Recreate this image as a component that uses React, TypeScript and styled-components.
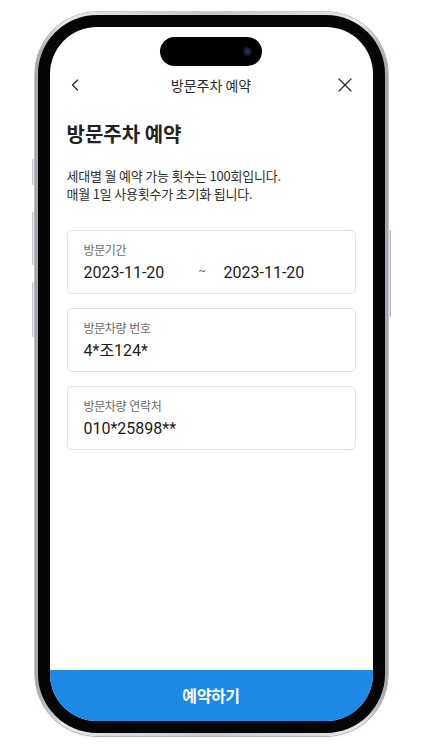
import React from 'react';
import styled, { createGlobalStyle } from 'styled-components';

const GlobalStyle = createGlobalStyle`
  * { box-sizing: border-box; }
  html, body { margin: 0; padding: 0; background: #ffffff; }
  body {
    font-family: "Noto Sans CJK KR", "Noto Sans", sans-serif;
    -webkit-font-smoothing: antialiased;
  }
`;

const Page = styled.div`
  width: 422px;
  height: 750px;
  padding-top: 12px;
  display: flex;
  justify-content: center;
  align-items: flex-start;
  background: #ffffff;
`;

const Frame = styled.div`
  position: relative;
  width: 353px;
  height: 724px;
  padding: 3px;
  border-radius: 62px;
  background: linear-gradient(90deg, #9ea3a9 0%, #e6e8eb 8%, #c3c7cc 50%, #e6e8eb 92%, #9ea3a9 100%);
  box-shadow: 0 0 0 0.5px #8d9197, 0 1px 2px rgba(0, 0, 0, 0.15);
`;

const SideButton = styled.div<{ $side: 'left' | 'right'; $top: number; $height: number }>`
  position: absolute;
  top: ${p => p.$top}px;
  ${p => (p.$side === 'left' ? 'left: -3px;' : 'right: -3px;')}
  width: 3px;
  height: ${p => p.$height}px;
  border-radius: 1px;
  background: linear-gradient(90deg, #b5b9be, #e4e6e9, #9da1a7);
`;

const Bezel = styled.div`
  width: 100%;
  height: 100%;
  padding: 12px;
  border-radius: 59px;
  background: #050505;
`;

const Screen = styled.div`
  position: relative;
  width: 100%;
  height: 100%;
  border-radius: 47px;
  overflow: hidden;
  background: #ffffff;
  display: flex;
  flex-direction: column;
`;

const Island = styled.div`
  position: absolute;
  top: 10px;
  left: 110px;
  width: 102px;
  height: 29px;
  border-radius: 15px;
  background: #000000;
`;

const Camera = styled.div`
  position: absolute;
  top: 10px;
  right: 10px;
  width: 9px;
  height: 9px;
  border-radius: 50%;
  background: radial-gradient(circle at 50% 50%, #2a3a6a 0%, #141a33 50%, #07080f 100%);
`;

const Header = styled.div`
  margin-top: 40px;
  height: 36px;
  padding: 0 17px 0 15px;
  display: flex;
  align-items: center;
  justify-content: space-between;
`;

const IconButton = styled.button`
  width: 20px;
  height: 20px;
  padding: 0;
  border: none;
  background: none;
  display: flex;
  align-items: center;
  justify-content: center;
  color: #2b2b2b;
`;

const HeaderTitle = styled.div`
  font-size: 14px;
  letter-spacing: 0;
  color: #2b2b2b;
  line-height: 20px;
  margin-left: 2px;
`;

const Content = styled.div`
  padding: 0 17px;
  display: flex;
  flex-direction: column;
`;

const Heading = styled.h1`
  margin: 17px 0 0;
  font-size: 20px;
  line-height: 28px;
  font-weight: 700;
  letter-spacing: 0;
  color: #222222;
`;

const Description = styled.p`
  margin: 19px 0 0;
  font-size: 13px;
  line-height: 18px;
  letter-spacing: -0.2px;
  color: #2e2e2e;
`;

const CardList = styled.div`
  margin-top: 27px;
  display: flex;
  flex-direction: column;
  gap: 14px;
`;

const Card = styled.div`
  height: 64px;
  padding: 11px 16px 0;
  border: 1px solid #e3e3e3;
  border-radius: 5px;
  background: #ffffff;
`;

const Label = styled.div`
  font-size: 12px;
  line-height: 16px;
  letter-spacing: -0.4px;
  word-spacing: 1px;
  color: #6a6a6a;
`;

const Value = styled.div`
  margin-top: 4px;
  font-family: Roboto, "Noto Sans CJK KR", sans-serif;
  font-size: 16px;
  line-height: 22px;
  color: #1c1c1c;
  display: flex;
  align-items: center;
`;

const DateText = styled.span<{ $width?: number }>`
  display: inline-block;
  width: ${p => (p.$width ? `${p.$width}px` : 'auto')};
`;

const Tilde = styled.span`
  display: inline-block;
  width: 25px;
  font-size: 11px;
  color: #555555;
  transform: translateY(-2px);
`;

const SubmitButton = styled.button`
  margin-top: auto;
  height: 51px;
  width: 100%;
  border: none;
  background: #1e88e5;
  color: #ffffff;
  font-family: "Noto Sans CJK KR", sans-serif;
  font-size: 16px;
  font-weight: 700;
  letter-spacing: -0.4px;
  padding-bottom: 3px;
`;

const fields = [
  { label: '방문차량 번호', value: '4*조124*' },
  { label: '방문차량 연락처', value: '010*25898**' },
];

export default function App() {
  return (
    <>
      <GlobalStyle />
      <Page>
        <Frame>
          <SideButton $side="left" $top={147} $height={26} />
          <SideButton $side="left" $top={200} $height={53} />
          <SideButton $side="left" $top={270} $height={55} />
          <SideButton $side="right" $top={218} $height={87} />
          <Bezel>
            <Screen>
              <Island>
                <Camera />
              </Island>
              <Header>
                <IconButton aria-label="뒤로">
                  <svg width="10" height="12" viewBox="0 0 10 12" fill="none">
                    <path d="M7.5 1L2.5 6L7.5 11" stroke="currentColor" strokeWidth="1.3" strokeLinecap="round" strokeLinejoin="round" />
                  </svg>
                </IconButton>
                <HeaderTitle>방문주차 예약</HeaderTitle>
                <IconButton aria-label="닫기">
                  <svg width="14" height="14" viewBox="0 0 14 14" fill="none">
                    <path d="M1 1L13 13M13 1L1 13" stroke="currentColor" strokeWidth="1.3" strokeLinecap="round" />
                  </svg>
                </IconButton>
              </Header>
              <Content>
                <Heading>방문주차 예약</Heading>
                <Description>
                  세대별 월 예약 가능 횟수는 100회입니다.
                  <br />
                  매월 1일 사용횟수가 초기화 됩니다.
                </Description>
                <CardList>
                  <Card>
                    <Label>방문기간</Label>
                    <Value>
                      <DateText $width={115}>2023-11-20</DateText>
                      <Tilde>~</Tilde>
                      <DateText>2023-11-20</DateText>
                    </Value>
                  </Card>
                  {fields.map(f => (
                    <Card key={f.label}>
                      <Label>{f.label}</Label>
                      <Value>{f.value}</Value>
                    </Card>
                  ))}
                </CardList>
              </Content>
              <SubmitButton>예약하기</SubmitButton>
            </Screen>
          </Bezel>
        </Frame>
      </Page>
    </>
  );
}
